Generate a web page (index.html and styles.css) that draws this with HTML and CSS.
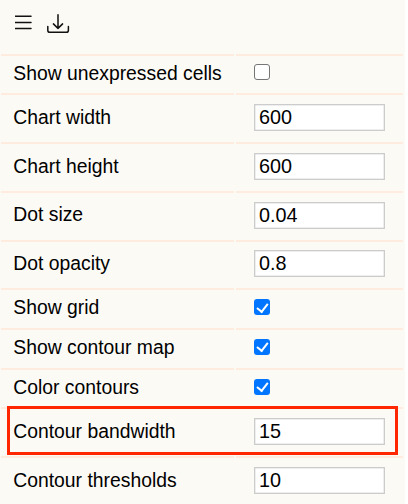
FILE: index.html
```html
<!DOCTYPE html>
<html lang="en">
<head>
<meta charset="utf-8">
<title>Chart settings</title>
<link rel="stylesheet" href="styles.css">
</head>
<body>
<main class="panel">
  <header class="toolbar">
    <svg class="icon" width="18" height="18" viewBox="0 0 18 18"><path d="M.4 2.2H16M.4 8.5H16M.4 14.6H16"/></svg>
    <svg class="icon" width="24" height="20" viewBox="0 0 24 20"><path d="M11 .8V14.4M6.4 9.9L11 14.4L15.6 9.9M.8 12.6V16.2Q.8 18.3 2.9 18.3H19.3Q21.4 18.3 21.4 16.2V12.6"/></svg>
  </header>
  <div class="row short"><label for="cells">Show unexpressed cells</label><div class="cell"><input id="cells" type="checkbox"></div></div>
  <div class="row"><label for="width">Chart width</label><div class="cell"><input id="width" type="text" value="600"></div></div>
  <div class="row"><label for="height">Chart height</label><div class="cell"><input id="height" type="text" value="600"></div></div>
  <div class="row"><label for="size">Dot size</label><div class="cell"><input id="size" type="text" value="0.04"></div></div>
  <div class="row"><label for="opacity">Dot opacity</label><div class="cell"><input id="opacity" type="text" value="0.8"></div></div>
  <div class="row short"><label for="grid">Show grid</label><div class="cell"><input id="grid" type="checkbox" checked></div></div>
  <div class="row short"><label for="map">Show contour map</label><div class="cell"><input id="map" type="checkbox" checked></div></div>
  <div class="row short"><label for="color">Color contours</label><div class="cell"><input id="color" type="checkbox" checked></div></div>
  <div class="row marked"><label for="band">Contour bandwidth</label><div class="cell"><input id="band" type="text" value="15"></div></div>
  <div class="row"><label for="thresholds">Contour thresholds</label><div class="cell"><input id="thresholds" type="text" value="10"></div></div>
</main>
</body>
</html>
```
FILE: styles.css
```css
*,
*::before,
*::after { box-sizing: border-box; }
body {
  margin: 0;
  background: #fff;
  color: #000;
  font: 19.33px/24px "Liberation Sans", Arial, sans-serif;
}
.panel {
  width: 405px;
  height: 504px;
  padding: 0 2px 0 1px;
  overflow: hidden;
  background: #fcfaf5;
}
.toolbar {
  display: flex;
  gap: 14px;
  height: 53.6px;
  padding: 14px 0 0 14px;
}
.icon {
  fill: none;
  stroke: #111;
  stroke-width: 1.5;
  stroke-linecap: round;
  stroke-linejoin: round;
}
.row {
  position: relative;
  display: grid;
  grid-template-columns: 233px 167px;
  column-gap: 2px;
  height: 48.75px;
}
.row.short { height: 39.7px; }
.row label,
.cell {
  display: flex;
  align-items: center;
  border-top: 2px solid #ffecdf;
}
.row label { padding: 0 0 1.4px 12.3px; white-space: nowrap; }
.cell { padding: 0 0 2px 18px; }
.row.short .cell { padding-bottom: 4px; }
input {
  margin: 0;
  border: 1px solid #ccc;
  border-radius: 0;
  color: #000;
  background: #fff;
  font: inherit;
}
input[type="text"] {
  width: 131px;
  height: 27px;
  padding: 0 0 0 4px;
  border: 1px solid #ccc;
  box-shadow: inset 0 0 0 .5px #ddd;
  font-size: 19.8px;
}
input[type="checkbox"] {
  appearance: none;
  width: 16px;
  height: 16px;
  border: 1px solid #767676;
  border-radius: 3px;
}
input[type="checkbox"]:checked {
  display: grid;
  place-items: center;
  border: 0;
  background: #0075ff;
}
input[type="checkbox"]:checked::after {
  content: "";
  width: 6.5px;
  height: 11px;
  margin: 0 0 2px 0;
  border: solid #fff;
  border-width: 0 2px 2px 0;
  transform: rotate(38deg);
}
.marked::after {
  content: "";
  position: absolute;
  z-index: 1;
  left: 6px;
  top: -1px;
  width: 391px;
  height: 49px;
  border: 3px solid #ff2600;
  pointer-events: none;
}
```
